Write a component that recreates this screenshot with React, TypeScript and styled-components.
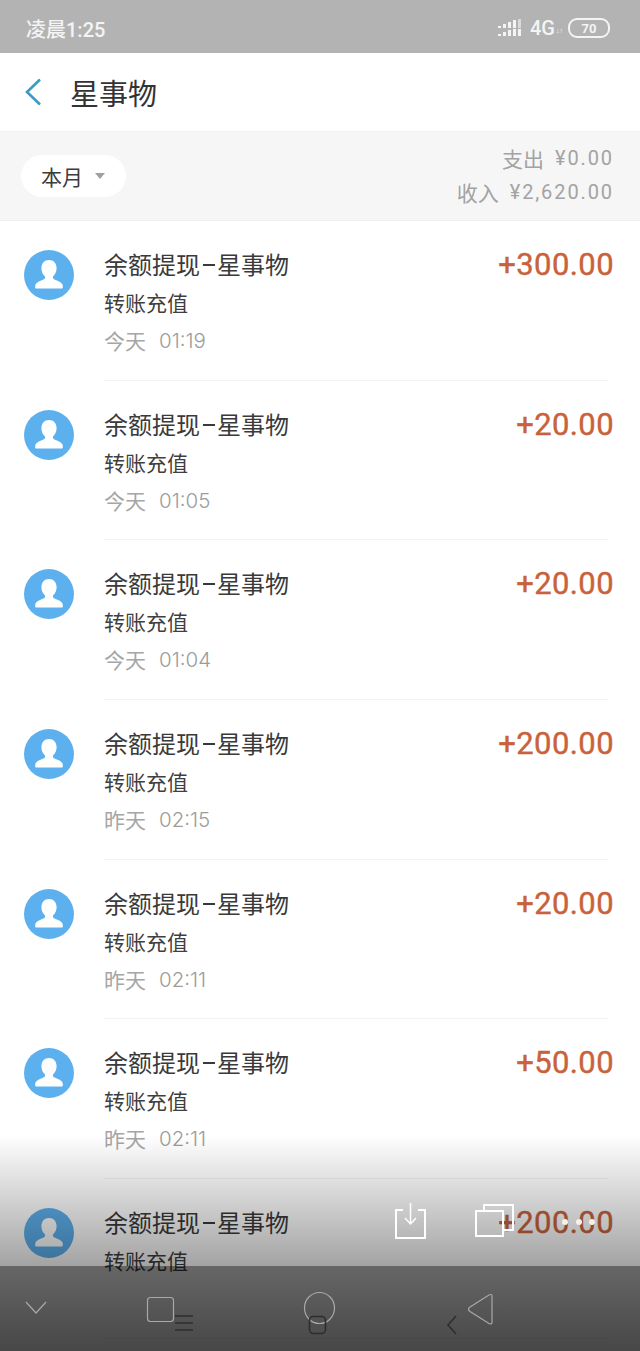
import React from "react";
import styled, { createGlobalStyle } from "styled-components";

const GlobalStyle = createGlobalStyle`
  html, body {
    margin: 0;
    padding: 0;
    background: #fff;
  }
  body {
    font-family: "Noto Sans CJK SC", "Noto Sans", sans-serif;
  }
`;

const Page = styled.div`
  position: relative;
  width: 640px;
  height: 1351px;
  overflow: hidden;
  background: #fff;
`;

const StatusBar = styled.div`
  height: 53px;
  background: #b3b3b3;
  display: flex;
  align-items: center;
  justify-content: space-between;
  padding: 3px 30px 0 26px;
  box-sizing: border-box;
  color: #f4f4f4;
`;

const Clock = styled.span`
  font-size: 20px;
  font-weight: 500;
  font-family: "Roboto", "Noto Sans CJK SC", sans-serif;
`;

const StatusRight = styled.div`
  display: flex;
  align-items: center;
`;

const NetLabel = styled.span`
  font-family: "Roboto", sans-serif;
  font-size: 20px;
  font-weight: 500;
  margin-left: 8px;
`;

const NetArrows = styled.span`
  font-family: "Roboto", sans-serif;
  font-size: 7px;
  margin: 6px 5px 0 1px;
`;

const Battery = styled.div`
  width: 38px;
  height: 16px;
  border: 2px solid #f4f4f4;
  border-radius: 9px;
  display: flex;
  align-items: center;
  justify-content: center;
  font-family: "Roboto", sans-serif;
  font-size: 13px;
  font-weight: 700;
  line-height: 1;
`;

const Header = styled.header`
  height: 78px;
  background: #fff;
  display: flex;
  align-items: center;
  padding-left: 24px;
`;

const HeaderTitle = styled.h1`
  margin: 0 0 0 28px;
  font-size: 29px;
  font-weight: 400;
  color: #333;
  line-height: 1;
`;

const FilterBar = styled.div`
  height: 90px;
  box-sizing: border-box;
  background: #f6f6f6;
  border-top: 1px solid #f1f1f1;
  border-bottom: 1px solid #eeeeee;
  display: flex;
  align-items: center;
  justify-content: space-between;
  padding: 0 26px 0 21px;
`;

const MonthPill = styled.div`
  width: 105px;
  height: 42px;
  box-sizing: border-box;
  border-radius: 21px;
  background: #fff;
  display: flex;
  align-items: center;
  padding-left: 20px;
  font-size: 21px;
  color: #3c3c3c;
`;

const Caret = styled.span`
  width: 0;
  height: 0;
  margin-left: 12px;
  border-left: 5px solid transparent;
  border-right: 5px solid transparent;
  border-top: 6px solid #a0a0a0;
`;

const Totals = styled.div`
  display: flex;
  flex-direction: column;
  align-items: flex-end;
  gap: 5px;
  margin-top: -2px;
`;

const TotalLine = styled.div`
  display: flex;
  align-items: center;
  font-size: 21px;
  line-height: 29px;
  color: #a3a3a3;
`;

const TotalValue = styled.span`
  margin-left: 11px;
  font-family: "Roboto", sans-serif;
  font-size: 20px;
  letter-spacing: 1.9px;
`;

const List = styled.div`
  display: flex;
  flex-direction: column;
`;

const Row = styled.div`
  height: 158.7px;
  box-sizing: border-box;
  display: flex;
  padding: 29px 26px 0 24px;
`;

const Avatar = styled.svg`
  width: 50px;
  height: 50px;
  flex: none;
`;

const RowBody = styled.div`
  flex: 1;
  margin-left: 30px;
  display: flex;
  flex-direction: column;
`;

const RowTitle = styled.div`
  font-size: 24px;
  line-height: 30px;
  color: #3a3a3a;
  margin-top: -1px;
  white-space: nowrap;
  display: flex;
  align-items: center;
`;

const RowDash = styled.span`
  width: 12px;
  height: 2px;
  margin: 2px 2px 0 3px;
  background: #3a3a3a;
`;

const RowKind = styled.div`
  font-size: 21px;
  line-height: 30px;
  color: #3f3f3f;
  margin-top: 8px;
`;

const RowTime = styled.div`
  font-size: 21px;
  line-height: 30px;
  color: #a6a6a6;
  margin-top: 7px;
  display: flex;
  align-items: center;
`;

const RowClock = styled.span`
  margin: 2px 0 0 13px;
  font-family: "Inter", sans-serif;
  font-size: 20.5px;
  font-weight: 300;
  color: #9c9c9c;
`;

const Amount = styled.div`
  font-family: "Roboto", sans-serif;
  font-size: 31px;
  font-weight: 400;
  -webkit-text-stroke: 0.4px #c9623a;
  line-height: 30px;
  color: #c9623a;
  letter-spacing: 0.4px;
`;

const Divider = styled.div`
  height: 1px;
  margin: 0 32px 0 104px;
  background: #f3f3f3;
  flex: none;
`;

const Fade = styled.div`
  position: absolute;
  left: 0;
  right: 0;
  top: 1135px;
  height: 131px;
  background: linear-gradient(to bottom, rgba(0, 0, 0, 0), rgba(0, 0, 0, 0.36));
`;

const NavBar = styled.div`
  position: absolute;
  left: 0;
  right: 0;
  top: 1266px;
  bottom: 0;
  background: linear-gradient(to bottom, rgba(0, 0, 0, 0.6), rgba(0, 0, 0, 0.72));
`;

const OverlayIcons = styled.svg`
  position: absolute;
  left: 0;
  top: 1190px;
  width: 640px;
  height: 161px;
`;

const rows = [
  { day: "今天", time: "01:19", amount: "+300.00" },
  { day: "今天", time: "01:05", amount: "+20.00" },
  { day: "今天", time: "01:04", amount: "+20.00" },
  { day: "昨天", time: "02:15", amount: "+200.00" },
  { day: "昨天", time: "02:11", amount: "+20.00" },
  { day: "昨天", time: "02:11", amount: "+50.00" },
  { day: "", time: "", amount: "+200.00" },
];

const AvatarIcon = () => (
  <Avatar viewBox="0 0 50 50">
    <circle cx="25" cy="25" r="25" fill="#5db0ee" />
    <path
      d="M25 10c-4.600 0-7.600 3.400-7.600 8.200 0 3.200 1.300 6 3.200 7.800.6.6.7 1.600.3 2.300-.6.9-1.700 1.500-4.300 2.500-3.200 1.200-5.400 2.800-5.400 5.200v1.500c0 .6.5 1 1 1h25.600c.5 0 1-.4 1-1V36c0-2.400-2.200-4-5.400-5.200-2.600-1-3.700-1.600-4.300-2.500-.4-.7-.3-1.700.3-2.300 1.900-1.800 3.200-4.600 3.200-7.800 0-4.800-3-8.200-7.600-8.200z"
      fill="#fff"
    />
  </Avatar>
);

const SignalIcon = () => (
  <svg width="24" height="18" viewBox="0 0 24 18" fill="#f4f4f4">
    <rect x="0" y="7" width="3" height="2" />
    <rect x="5" y="5" width="3" height="4" />
    <rect x="10" y="3" width="3" height="6" />
    <rect x="15" y="1" width="3" height="8" />
    <rect x="20" y="0" width="3" height="9" opacity="0.6" />
    <rect x="0" y="15" width="3" height="2" />
    <rect x="5" y="13" width="3" height="4" />
    <rect x="10" y="11" width="3" height="6" />
    <rect x="15" y="10" width="3" height="7" />
    <rect x="20" y="10" width="3" height="7" />
  </svg>
);

export default function App() {
  return (
    <Page>
      <GlobalStyle />
      <StatusBar>
        <Clock>凌晨1:25</Clock>
        <StatusRight>
          <SignalIcon />
          <NetLabel>4G</NetLabel>
          <NetArrows>↓↑</NetArrows>
          <Battery>70</Battery>
        </StatusRight>
      </StatusBar>
      <Header>
        <svg width="18" height="28" viewBox="0 0 18 28" fill="none">
          <path d="M16 1.500 3 14l13 12.500" stroke="#3d9ac4" strokeWidth="2.600" />
        </svg>
        <HeaderTitle>星事物</HeaderTitle>
      </Header>
      <FilterBar>
        <MonthPill>
          本月
          <Caret />
        </MonthPill>
        <Totals>
          <TotalLine>
            支出
            <TotalValue>¥0.00</TotalValue>
          </TotalLine>
          <TotalLine>
            收入
            <TotalValue>¥2,620.00</TotalValue>
          </TotalLine>
        </Totals>
      </FilterBar>
      <List>
        {rows.map((row, index) => (
          <React.Fragment key={index}>
            <Row>
              <AvatarIcon />
              <RowBody>
                <RowTitle>
                  余额提现
                  <RowDash />
                  星事物
                </RowTitle>
                <RowKind>转账充值</RowKind>
                <RowTime>
                  {row.day}
                  <RowClock>{row.time}</RowClock>
                </RowTime>
              </RowBody>
              <Amount>{row.amount}</Amount>
            </Row>
            <Divider />
          </React.Fragment>
        ))}
      </List>
      <Fade />
      <NavBar />
      <OverlayIcons viewBox="0 0 640 161" fill="none">
        {/* download */}
        <g stroke="#fff" strokeWidth="2">
          <path d="M403 20h-7v28h29V20h-7" />
          <path d="M410.500 13v20M405 28l5.500 6 5.500-6" strokeWidth="1.500" />
          {/* windows */}
          <path d="M476 21h27v25h-27z" />
          <path d="M484 20v-5h29v25h-10" />
        </g>
        <g fill="#f6f0e6">
          <circle cx="565" cy="32" r="3" />
          <circle cx="579" cy="32" r="3" />
          <circle cx="592" cy="32" r="3" />
        </g>
        {/* soft keys, outer */}
        <g stroke="#a8a8a8" strokeWidth="1.200">
          <path d="M26 112l10 11 10-11" />
          <rect x="147.500" y="107.500" width="26" height="24" rx="3" />
          <ellipse cx="319.500" cy="118" rx="15" ry="15.500" />
          <path d="M492 106v26c0 2-1 2.500-3 1.500l-19-12c-2-1.500-2-3 0-4.500l19-12c2-1 3-.5 3 1z" />
        </g>
        {/* soft keys, inner */}
        <g stroke="#2e2e2e" strokeWidth="1.600">
          <path d="M175 126h18M175 133h18M175 140h18" />
          <rect x="309.500" y="126.500" width="16" height="17" rx="4" />
          <path d="M456 126l-8 9 8 9" />
        </g>
      </OverlayIcons>
    </Page>
  );
}
